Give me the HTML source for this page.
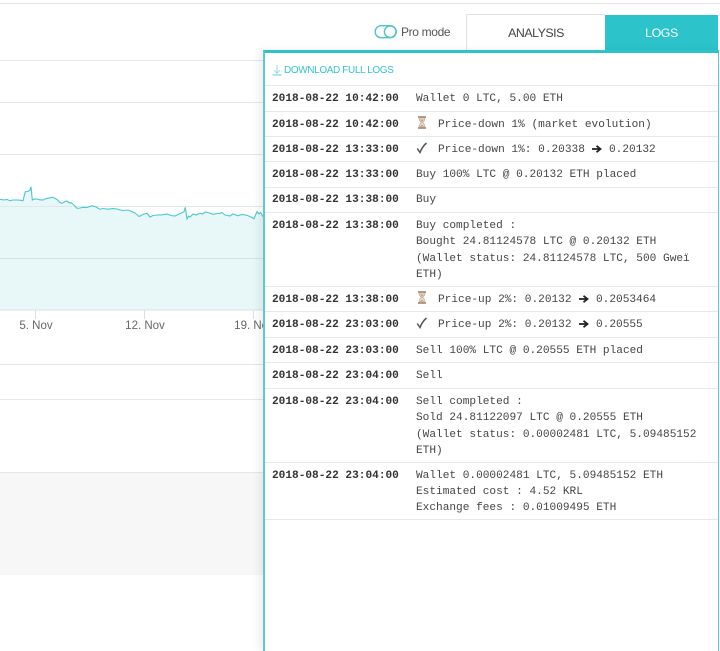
<!DOCTYPE html>
<html>
<head>
<meta charset="utf-8">
<style>
html,body{margin:0;padding:0;background:#fff;overflow:hidden;}
#p{position:relative;width:720px;height:651px;overflow:hidden;background:#fff;font-family:"Liberation Sans",sans-serif;}
.g{position:absolute;left:0;height:1px;background:#e6e6ea;}
#panel{position:absolute;left:263px;top:50px;width:453px;height:598px;background:#fff;border-left:2px solid #5ccbd0;border-right:1px solid #5ccbd0;border-top:3px solid #2cc3cb;box-shadow:-4px 0 8px rgba(0,0,0,.07);}
.l{position:absolute;left:265px;width:453px;height:1px;background:#e8e8ea;}
.r{position:absolute;font-family:"Liberation Mono",monospace;font-size:11.14px;line-height:16.3px;color:#454545;white-space:pre;}
.d{left:272px;font-weight:bold;color:#333;}
.t{left:416px;}
.t2{left:438px;}
.i{position:absolute;}
</style>
</head>
<body>
<div id="p">
<div class="g" style="top:3px;width:720px;background:#e2e2e2"></div>
<div class="g" style="top:60px;width:263px"></div>
<div class="g" style="top:102px;width:263px"></div>
<div class="g" style="top:154px;width:263px"></div>
<div class="g" style="top:206px;width:263px"></div>
<svg style="position:absolute;left:0;top:170px" width="264" height="170" viewBox="0 0 264 170">
<path fill="#e8f7f8" d="M0 29.3L10 30.7L17 30L23 30.7L25.3 21.7L30 20L31 16.7L32.3 30L37 29L43 30L47 28.3L53 27.3L62 33.3L67 31L71 32.7L77 38.3L83 37.3L92 35.7L100 39.3L117 39L130 40.7L140 46L147 43.3L150 47L157 45L167 44L175 46L184 41.7L185.3 37.3L187 49L190 46L193 44L200 43.3L205 42L213 44.3L220 43.3L230 46L233 44L247 45.3L254 48.7L257 41.7L263 46.7V140H0Z"/>
<rect x="0" y="88" width="263" height="1" fill="#d5e2e4"/>
<rect x="0" y="36" width="263" height="1" fill="#dfe9ea"/>
<path fill="none" stroke="#4dc8ce" stroke-width="1.1" d="M0 29.3L4 30L7 29.5L10 30.7L13 30L17 30L20 30.2L23 30.7L25.3 21.7L28 21.5L30 20L31 16.7L32.3 30L34 29.2L37 29L40 29.8L43 30L45 29L47 28.3L50 27.8L53 27.3L57 29.5L60 32.5L62 33.3L65 31.5L67 31L69 32.8L71 32.7L74 35L77 38.3L80 38L83 37.3L87 37.5L92 35.7L96 37L100 39.3L103 38.5L108 39.2L113 38.6L117 39L122 40.5L128 40L130 40.7L135 43L139 46.5L140 46L144 44L147 43.3L150 47L153 45.5L157 45L162 44.8L167 44L171 45.5L175 46L180 43.5L184 41.7L185.3 37.3L187 49L188.5 46L190 47L193 44L196 45L200 43.3L203 44L205 42L208 42.5L213 44.3L217 43.5L220 43.3L222 42.5L225 45L230 46L233 44L238 45.8L242 44.5L247 45.3L251 47L254 48.7L257 41.7L259 44L260.5 42.5L263 46.7"/>
<rect x="0" y="139.5" width="263" height="1" fill="#d9e0ec"/>
<rect x="35" y="140" width="1" height="9" fill="#d9e0ec"/>
<rect x="144" y="140" width="1" height="9" fill="#d9e0ec"/>
<rect x="253" y="140" width="1" height="9" fill="#d9e0ec"/>
<text x="36" y="159" text-anchor="middle" font-family="Liberation Sans" font-size="11.5" fill="#666">5. Nov</text>
<text x="145" y="159" text-anchor="middle" font-family="Liberation Sans" font-size="11.5" fill="#666">12. Nov</text>
<text x="254" y="159" text-anchor="middle" font-family="Liberation Sans" font-size="11.5" fill="#666">19. Nov</text>
</svg>
<div class="g" style="top:364px;width:263px;height:1px;background:#e4e4ea"></div>
<div class="g" style="top:399px;width:263px;background:#e8e8ec"></div>
<div style="position:absolute;left:0;top:472px;width:263px;height:103px;background:#f7f7f8;border-top:1px solid #e6e6ea;box-sizing:border-box"></div>

<svg class="i" style="left:374px;top:24px" width="25" height="16" viewBox="0 0 25 16"><rect x="1.2" y="1.7" width="21" height="12" rx="6" fill="#fff" stroke="#4dc3c9" stroke-width="1.4"/><circle cx="16.2" cy="7.7" r="5.8" fill="#fff" stroke="#4dc3c9" stroke-width="1.4"/></svg>
<div style="position:absolute;left:401px;top:24px;font-size:12px;line-height:16px;color:#555;letter-spacing:-.35px">Pro mode</div>
<div style="position:absolute;left:466px;top:14px;width:139px;height:37px;box-sizing:border-box;border:1px solid #e2e2e2;border-bottom:0;border-right:0;background:#fff;text-align:center;font-size:12.4px;line-height:36px;color:#444;letter-spacing:-.5px">ANALYSIS</div>
<div style="position:absolute;left:605px;top:15px;width:113px;height:36px;background:#2cc3cb;text-align:center;font-size:12.4px;line-height:35px;color:#fff;letter-spacing:-.4px;padding-top:1px;box-sizing:border-box">LOGS</div>

<div id="panel"></div>
<svg class="i" style="left:271px;top:64px" width="12" height="12" viewBox="0 0 12 12"><path d="M6 1V9M3 6.2L6 9.2L9 6.2" fill="none" stroke="#8fdde1" stroke-width="1"/><path d="M1.500 11H10.500" stroke="#5ccfd5" stroke-width="1"/></svg>
<div style="position:absolute;left:284px;top:64px;font-size:10px;line-height:14px;color:#35c4cc;letter-spacing:-.38px">DOWNLOAD FULL LOGS</div>

<div class="l" style="top:85px"></div>
<div class="l" style="top:111px"></div>
<div class="l" style="top:136px"></div>
<div class="l" style="top:161px"></div>
<div class="l" style="top:187px"></div>
<div class="l" style="top:212px"></div>
<div class="l" style="top:286px"></div>
<div class="l" style="top:311px"></div>
<div class="l" style="top:337px"></div>
<div class="l" style="top:362px"></div>
<div class="l" style="top:388px"></div>
<div class="l" style="top:462px"></div>
<div class="l" style="top:519px"></div>

<div class="r d" style="top:91px">2018-08-22 10:42:00</div><div class="r t" style="top:91px">Wallet 0 LTC, 5.00 ETH</div>
<div class="r d" style="top:117px">2018-08-22 10:42:00</div><div class="r t2" style="top:117px">Price-down 1% (market evolution)</div>
<div class="r d" style="top:142px">2018-08-22 13:33:00</div><div class="r t2" style="top:142px">Price-down 1%: 0.20338</div><div class="r" style="left:609px;top:142px">0.20132</div>
<div class="r d" style="top:167px">2018-08-22 13:33:00</div><div class="r t" style="top:167px">Buy 100% LTC @ 0.20132 ETH placed</div>
<div class="r d" style="top:192px">2018-08-22 13:38:00</div><div class="r t" style="top:192px">Buy</div>
<div class="r d" style="top:218px">2018-08-22 13:38:00</div><div class="r t" style="top:218px">Buy completed :
Bought 24.81124578 LTC @ 0.20132 ETH
(Wallet status: 24.81124578 LTC, 500 Gweï
ETH)</div>
<div class="r d" style="top:292px">2018-08-22 13:38:00</div><div class="r t2" style="top:292px">Price-up 2%: 0.20132</div><div class="r" style="left:596px;top:292px">0.2053464</div>
<div class="r d" style="top:317px">2018-08-22 23:03:00</div><div class="r t2" style="top:317px">Price-up 2%: 0.20132</div><div class="r" style="left:596px;top:317px">0.20555</div>
<div class="r d" style="top:343px">2018-08-22 23:03:00</div><div class="r t" style="top:343px">Sell 100% LTC @ 0.20555 ETH placed</div>
<div class="r d" style="top:368px">2018-08-22 23:04:00</div><div class="r t" style="top:368px">Sell</div>
<div class="r d" style="top:394px">2018-08-22 23:04:00</div><div class="r t" style="top:394px">Sell completed :
Sold 24.81122097 LTC @ 0.20555 ETH
(Wallet status: 0.00002481 LTC, 5.09485152
ETH)</div>
<div class="r d" style="top:467.500px">2018-08-22 23:04:00</div><div class="r t" style="top:467.500px">Wallet 0.00002481 LTC, 5.09485152 ETH
Estimated cost : 4.52 KRL
Exchange fees : 0.01009495 ETH</div>

<svg class="i" style="left:416px;top:116px" width="12" height="13" viewBox="0 0 12 13"><path d="M2 1H10M2 12H10" stroke="#9a7d6a" stroke-width="1.4"/><path d="M3 2H9C9 5 7 6 6.500 6.500C7 7 9 8 9 11H3C3 8 5 7 5.500 6.500C5 6 3 5 3 2Z" fill="#e9dccb" stroke="#b9a48f" stroke-width=".6"/><path d="M4 3.500H8L6 6Z" fill="#c9a27e"/><path d="M4 10.500L6 8.500L8 10.500Z" fill="#c9a27e"/></svg>
<svg class="i" style="left:416px;top:291px" width="12" height="13" viewBox="0 0 12 13"><path d="M2 1H10M2 12H10" stroke="#9a7d6a" stroke-width="1.4"/><path d="M3 2H9C9 5 7 6 6.500 6.500C7 7 9 8 9 11H3C3 8 5 7 5.500 6.500C5 6 3 5 3 2Z" fill="#e9dccb" stroke="#b9a48f" stroke-width=".6"/><path d="M4 3.500H8L6 6Z" fill="#c9a27e"/><path d="M4 10.500L6 8.500L8 10.500Z" fill="#c9a27e"/></svg>
<svg class="i" style="left:416px;top:142px" width="12" height="12" viewBox="0 0 12 12"><path d="M1.200 6.500L4 10.500C5.500 6.500 7.500 3.500 10.500 1" fill="none" stroke="#555" stroke-width="1.500"/></svg>
<svg class="i" style="left:416px;top:317px" width="12" height="12" viewBox="0 0 12 12"><path d="M1.200 6.500L4 10.500C5.500 6.500 7.500 3.500 10.500 1" fill="none" stroke="#555" stroke-width="1.500"/></svg>
<svg class="i" style="left:592px;top:144px" width="10" height="10" viewBox="0 0 10 10"><path d="M0 5H7M4.500 1.800L8.500 5L4.500 8.200" fill="none" stroke="#222" stroke-width="1.800"/></svg>
<svg class="i" style="left:579px;top:294px" width="10" height="10" viewBox="0 0 10 10"><path d="M0 5H7M4.500 1.800L8.500 5L4.500 8.200" fill="none" stroke="#222" stroke-width="1.800"/></svg>
<svg class="i" style="left:579px;top:319px" width="10" height="10" viewBox="0 0 10 10"><path d="M0 5H7M4.500 1.800L8.500 5L4.500 8.200" fill="none" stroke="#222" stroke-width="1.800"/></svg>
</div>
</body>
</html>
